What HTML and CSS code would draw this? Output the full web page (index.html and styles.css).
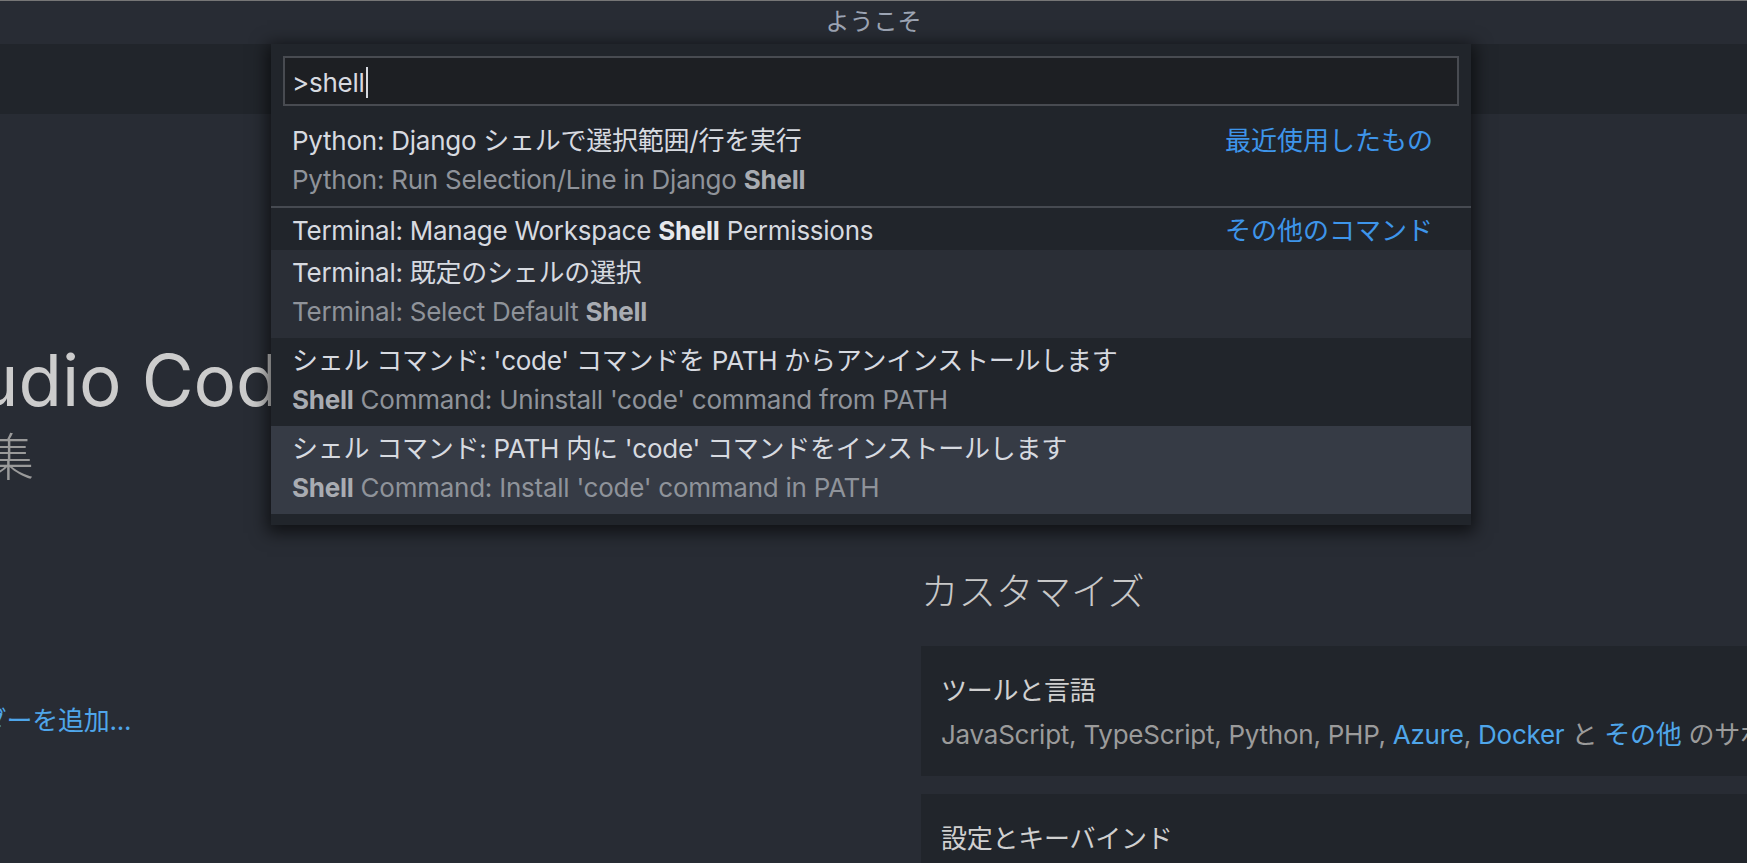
FILE: index.html
```html
<!DOCTYPE html>
<html lang="ja">
<head>
<meta charset="utf-8">
<title>ようこそ</title>
<link rel="stylesheet" href="styles.css">
</head>
<body>
<div class="window">
  <header class="titlebar"><span class="title-text">ようこそ</span></header>
  <div class="tabbar"></div>
  <main class="editor">
    <div class="welcome">
      <section class="col-left">
        <h1 class="app-title">Visual Studio Code</h1>
        <p class="app-subtitle">進化した編集</p>
        <div class="start">
          <a class="link start-link">ワークスペース フォルダーを追加...</a>
        </div>
      </section>
      <section class="col-right">
        <h2 class="section-heading">カスタマイズ</h2>
        <div class="card">
          <div class="card-title">ツールと言語</div>
          <div class="card-detail">JavaScript, TypeScript, Python, PHP, <a class="link">Azure</a>, <a class="link">Docker</a> と <a class="link">その他</a> のサポートをインストールします</div>
        </div>
        <div class="card">
          <div class="card-title">設定とキーバインド</div>
          <div class="card-detail"><a class="link">Vim</a>, <a class="link">Sublime</a>, <a class="link">Atom</a> と <a class="link">その他</a> の設定とキーボード ショートカットをインストールします</div>
        </div>
      </section>
    </div>
  </main>

  <div class="quick-input">
    <div class="qi-box"><span class="qi-value">&gt;shell</span><span class="qi-cursor"></span></div>
    <div class="qi-list">
      <div class="qi-row two">
        <div class="qi-texts">
          <div class="qi-label">Python: Django シェルで選択範囲/行を実行</div>
          <div class="qi-detail">Python: Run Selection/Line in Django <b class="hl">Shell</b></div>
        </div>
        <div class="qi-group">最近使用したもの</div>
      </div>
      <div class="qi-row one">
        <div class="qi-texts">
          <div class="qi-label">Terminal: Manage Workspace <b class="hl">Shell</b> Permissions</div>
        </div>
        <div class="qi-group">その他のコマンド</div>
      </div>
      <div class="qi-row two hover">
        <div class="qi-texts">
          <div class="qi-label">Terminal: 既定のシェルの選択</div>
          <div class="qi-detail">Terminal: Select Default <b class="hl">Shell</b></div>
        </div>
      </div>
      <div class="qi-row two">
        <div class="qi-texts">
          <div class="qi-label">シェル コマンド: 'code' コマンドを PATH からアンインストールします</div>
          <div class="qi-detail"><b class="hl">Shell</b> Command: Uninstall 'code' command from PATH</div>
        </div>
      </div>
      <div class="qi-row two focused">
        <div class="qi-texts">
          <div class="qi-label">シェル コマンド: PATH 内に 'code' コマンドをインストールします</div>
          <div class="qi-detail"><b class="hl">Shell</b> Command: Install 'code' command in PATH</div>
        </div>
      </div>
    </div>
  </div>
</div>
</body>
</html>
```

FILE: styles.css
```css
* { box-sizing: border-box; margin: 0; padding: 0; }

html, body {
  width: 1747px;
  height: 863px;
  overflow: hidden;
  background: #282c34;
}

body {
  font-family: "Inter", "Noto Sans CJK JP", sans-serif;
  font-size: 26px;
  letter-spacing: -0.25px;
  color: #d7dae0;
}

.window {
  position: relative;
  width: 1747px;
  height: 863px;
  overflow: hidden;
  display: flex;
  flex-direction: column;
}

/* title bar */
.titlebar {
  flex: none;
  height: 44px;
  background: #282c34;
  border-top: 1px solid #767676;
  display: flex;
  align-items: center;
  justify-content: center;
  padding-bottom: 6px;
}
.title-text {
  font-family: "Noto Sans CJK JP", sans-serif;
  font-size: 24px;
  line-height: 30px;
  letter-spacing: 0;
  color: #9da5b4;
}

.tabbar {
  flex: none;
  height: 70px;
  background: #21252b;
}

/* editor / welcome page */
.editor {
  flex: 1;
  background: #282c34;
  overflow: hidden;
}
.welcome {
  display: flex;
}
.col-left {
  flex: none;
  width: 1201px;
  margin-left: -280px;
  padding-top: 226px;
  white-space: nowrap;
}
.app-title {
  font-size: 71px;
  font-weight: 400;
  line-height: 80px;
  letter-spacing: 0;
  margin-left: -35px;
  color: #cccccc;
}
.app-subtitle {
  font-family: "Noto Sans CJK JP", sans-serif;
  font-size: 51px;
  line-height: 60px;
  letter-spacing: 0;
  margin-top: 4px;
  margin-left: 8px;
  color: #9a9a9a;
  font-weight: 300;
}
.start {
  margin-top: 218px;
  line-height: 38px;
}
.link {
  color: #4fa6ea;
  text-decoration: none;
}

.col-right {
  flex: none;
  width: 1000px;
  padding-top: 453px;
  white-space: nowrap;
}
.section-heading {
  font-family: "Noto Sans CJK JP", sans-serif;
  font-size: 37.5px;
  font-weight: 300;
  line-height: 44px;
  letter-spacing: 0;
  color: #c8c8c8;
  margin-bottom: 35px;
}
.card {
  background: #21252b;
  height: 130px;
  padding: 24px 0 0 20px;
  margin-bottom: 18px;
  overflow: hidden;
}
.card-title {
  font-family: "Noto Sans CJK JP", sans-serif;
  height: 38px;
  line-height: 38px;
  color: #d0d0d0;
}
.card-detail {
  height: 38px;
  line-height: 38px;
  margin-top: 8px;
  color: #9b9b9b;
}

/* quick input overlay */
.quick-input {
  position: absolute;
  top: 44px;
  left: 271px;
  width: 1200px;
  background: #21252b;
  padding: 12px 0 11px;
  box-shadow: 0 4px 16px 4px rgba(0, 0, 0, 0.6);
  z-index: 10;
}
.qi-box {
  margin: 0 12px;
  height: 50px;
  border: 2px solid #484b51;
  background: #1d1f23;
  padding: 4px 7px 0;
  line-height: 42px;
  color: #d7dae0;
  white-space: nowrap;
  overflow: hidden;
}
.qi-cursor {
  display: inline-block;
  width: 2px;
  height: 31px;
  margin-left: 1px;
  background: #d7dae0;
  vertical-align: -6px;
}
.qi-list {
  margin-top: 12px;
}
.qi-row {
  display: flex;
  padding: 0 38px 0 21px;
  white-space: nowrap;
}
.qi-row.two {
  height: 88px;
  padding-top: 4px;
}
.qi-row.one {
  height: 44px;
  border-top: 2px solid #464a51;
  padding-top: 4px;
}
.qi-row.hover {
  background: #2a2e36;
}
.qi-row.focused {
  background: #363b45;
}
.qi-texts {
  flex: 1;
  min-width: 0;
  overflow: hidden;
}
.qi-label,
.qi-detail {
  height: 38px;
  line-height: 38px;
}
.qi-label .hl {
  font-weight: 700;
  color: #e6e8ec;
}
.qi-detail {
  margin-top: 1px;
  color: #8f939a;
}
.qi-detail .hl {
  font-weight: 700;
  color: #a9acb2;
}
.qi-group {
  flex: none;
  margin-top: -2px;
  font-family: "Noto Sans CJK JP", sans-serif;
  line-height: 38px;
  letter-spacing: 0;
  color: #3e95ea;
}
```
